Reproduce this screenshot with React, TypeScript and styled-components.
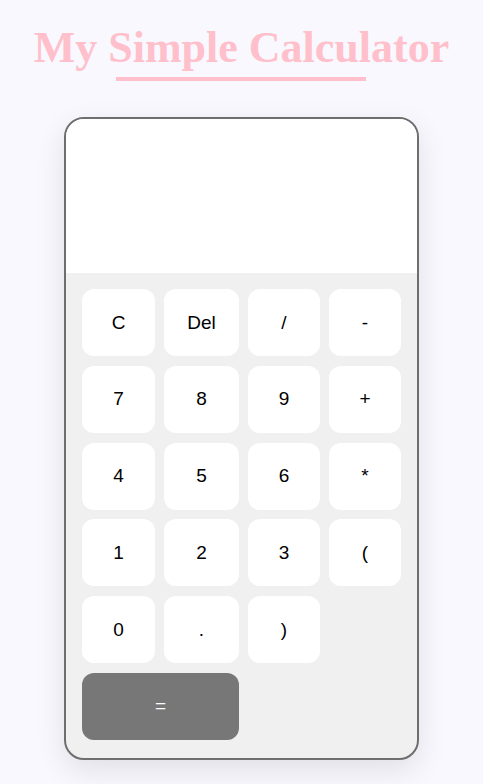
import { createGlobalStyle } from 'styled-components';
import styled from 'styled-components';

const GlobalStyle = createGlobalStyle`
  html, body {
    margin: 0;
    padding: 0;
    background: #f8f8fe;
  }
  * {
    box-sizing: border-box;
  }
`;

const Page = styled.div`
  display: flex;
  flex-direction: column;
  align-items: center;
  padding-top: 22px;
  min-height: 784px;
`;

const Title = styled.h1`
  position: relative;
  margin: 0 0 36px;
  font-family: "Liberation Serif", "Times New Roman", serif;
  font-size: 44px;
  font-weight: bold;
  line-height: 52px;
  color: #ffc0cb;
  padding-bottom: 7px;

  &::after {
    content: '';
    position: absolute;
    left: 50%;
    bottom: 0;
    transform: translateX(-50%);
    width: 250px;
    height: 4px;
    background: #ffc0cb;
  }
`;

const Calculator = styled.div`
  width: 355px;
  border: 2px solid #6e6e6e;
  border-radius: 20px;
  overflow: hidden;
  box-shadow: 0 10px 30px rgba(0, 0, 0, 0.1);
  background: #f0f0f1;
`;

const Display = styled.div`
  height: 154px;
  background: #ffffff;
`;

const Keypad = styled.div`
  display: grid;
  grid-template-columns: 73fr 75fr 72fr 72fr;
  grid-auto-rows: 67px;
  column-gap: 9px;
  row-gap: 9.8px;
  padding: 16px 16px 18px;
`;

const Key = styled.button<{ $wide?: boolean; $accent?: boolean }>`
  grid-column: ${p => (p.$wide ? 'span 2' : 'auto')};
  border: none;
  border-radius: 12px;
  background: ${p => (p.$accent ? '#777777' : '#ffffff')};
  color: ${p => (p.$accent ? '#ffffff' : '#000000')};
  font-family: "Liberation Sans", Arial, sans-serif;
  font-size: 19px;
  cursor: pointer;
`;

const keys = ['C', 'Del', '/', '-', '7', '8', '9', '+', '4', '5', '6', '*', '1', '2', '3', '(', '0', '.', ')'];

export default function App() {
  return (
    <Page>
      <GlobalStyle />
      <Title>My Simple Calculator</Title>
      <Calculator>
        <Display />
        <Keypad>
          {keys.map((k, i) => (
            <Key key={k} style={i === 18 ? { gridColumn: 3 } : undefined}>
              {k}
            </Key>
          ))}
          <Key $wide $accent>=</Key>
        </Keypad>
      </Calculator>
    </Page>
  );
}
